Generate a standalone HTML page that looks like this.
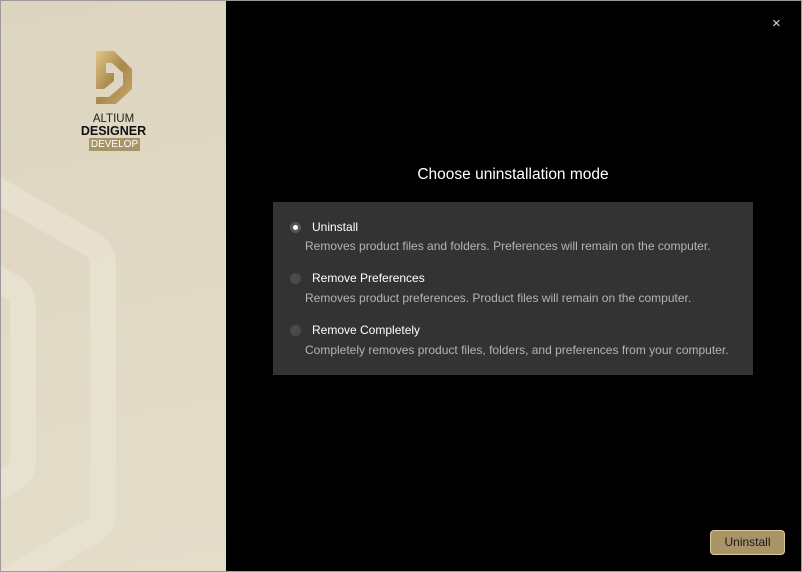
<!DOCTYPE html>
<html><head><style>
*{margin:0;padding:0;box-sizing:border-box}
body{width:802px;height:572px;background:#000;font-family:"Segoe UI","Liberation Sans",sans-serif;position:relative;overflow:hidden}
.win{position:absolute;left:0;top:0;width:802px;height:572px;border:1px solid #9a9a9a}
.left{position:absolute;left:1px;top:1px;width:225px;height:570px;background:linear-gradient(170deg,#ddd5bf,#e4ddca);overflow:hidden}
.t{position:absolute;color:#fff}
.panel{position:absolute;left:273px;top:202px;width:480px;height:173px;background:#333}
.opt{position:absolute;left:39px;font-size:12px;color:#fff}
.desc{position:absolute;left:32px;font-size:12px;color:#b4b4b4}
.rad{position:absolute;left:17px;width:11px;height:11px;border-radius:50%;background:#4a4a4a}
.rad.on{background:#fff;border:3px solid #555}
.btn{position:absolute;left:710px;top:530px;width:75px;height:25px;background:#a89467;border:1px solid #dccb9c;border-radius:4px;font-size:12px;color:#1a1a1a;text-align:center;line-height:23px}
</style></head><body>
<div class="win"></div>
<div class="left">
<svg width="225" height="570" style="position:absolute;left:0;top:0">
<g fill="none" stroke="#e9e3d3" stroke-width="26" stroke-linejoin="round" opacity="0.8">
<path d="M-20 180 L90 243 Q102 250 102 264 L102 510 Q102 524 90 531 L-20 595"/>
<path d="M-20 268 L14 288 Q22 294 22 304 L22 460 Q22 470 14 476 L-20 496"/>
</g>
<g transform="translate(95,50)">
<defs><linearGradient id="g" x1="0" y1="0" x2="1" y2="1"><stop offset="0" stop-color="#e0c68a"/><stop offset="0.5" stop-color="#a8894d"/><stop offset="1" stop-color="#caa968"/></linearGradient></defs>
<path d="M0 0 L18 0 L36 18 L36 38 L20 53 L0 53 L0 46 L13 46 L27 34 L27 22 L16 12 L10 12 L10 22 L18 22 L18 30 L8 38 L0 38 Z" fill="url(#g)"/>
</g>
</svg>
<div style="position:absolute;left:0;width:225px;top:112px;text-align:center;font-size:11.5px;color:#222">ALTIUM</div>
<div style="position:absolute;left:0;width:225px;top:123px;text-align:center;font-size:12.5px;font-weight:bold;color:#111">DESIGNER</div>
<div style="position:absolute;left:88px;top:137px;width:51px;height:13px;background:#a89467;color:#fff;font-size:10px;text-align:center;line-height:13px">DEVELOP</div>
</div>
<div class="t" style="left:772px;top:15px;font-size:15px;color:#ddd">×</div>
<div class="t" style="left:0;width:1026px;top:166px;font-size:15.5px;text-align:center">Choose uninstallation mode</div>
<div class="panel">
<div class="rad on" style="top:20px"></div>
<div class="opt" style="top:18px">Uninstall</div>
<div class="desc" style="top:37px">Removes product files and folders. Preferences will remain on the computer.</div>
<div class="rad" style="top:71px"></div>
<div class="opt" style="top:69px">Remove Preferences</div>
<div class="desc" style="top:89px">Removes product preferences. Product files will remain on the computer.</div>
<div class="rad" style="top:123px"></div>
<div class="opt" style="top:121px">Remove Completely</div>
<div class="desc" style="top:141px">Completely removes product files, folders, and preferences from your computer.</div>
</div>
<div class="btn">Uninstall</div>
</body></html>
